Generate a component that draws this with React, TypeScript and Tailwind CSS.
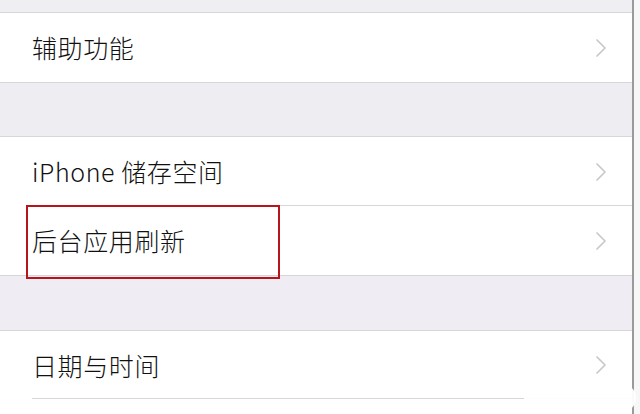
import React from "react";

const FONT = { fontFamily: '"Noto Sans CJK SC", "Noto Sans", sans-serif' };

function Chevron() {
  return (
    <svg width="12" height="20" viewBox="0 0 12 20" className="shrink-0">
      <polyline points="2,2 10,10 2,18" fill="none" stroke="#c7c7cc" strokeWidth="1.7" strokeLinecap="round" strokeLinejoin="round" />
    </svg>
  );
}

function Row({ label, h, children, sep }: { label: string; h: string; children?: React.ReactNode; sep?: boolean }) {
  return (
    <div className={`relative bg-white ${h}`}>
      <div className="flex h-full items-center pl-8 pr-[25px]">
        <span className="flex-1 text-[25px] font-light leading-none text-[#111111] tracking-[0.6px]">{label}</span>
        <Chevron />
      </div>
      {sep && <div className="absolute bottom-0 left-8 right-0 h-px bg-[#d6d6da]" />}
      {children}
    </div>
  );
}

export default function App() {
  return (
    <div className="relative flex h-[414px] w-[640px] overflow-hidden bg-white" style={FONT}>
      <div className="flex w-[632px] flex-col">
        <div className="h-[13px] border-b border-[#d6d6da] bg-[#efeff3]" />
        <Row label="辅助功能" h="h-[69px]" />
        <div className="h-[55px] border-y border-[#d6d6da] bg-[#eeedf2]" />
        <Row label="iPhone 储存空间" h="h-[69px]" sep />
        <Row label="后台应用刷新" h="h-[69px]">
          <div className="absolute -top-px left-[26px] h-[74px] w-[254px] border-2 border-[#b8141c]" />
        </Row>
        <div className="h-[56px] border-y border-[#d6d6da] bg-[#efedf3]" />
        <Row label="日期与时间" h="h-[68px]" sep />
        <div className="flex-1 bg-white" />
      </div>
      <div className="w-[2px] bg-[#9a9a9c]" />
      <div className="flex-1 bg-[#f7f7f7]" />
      <div className="absolute left-[524px] top-[384px] h-[28px] w-[112px] rounded-full bg-white opacity-95" />
    </div>
  );
}
